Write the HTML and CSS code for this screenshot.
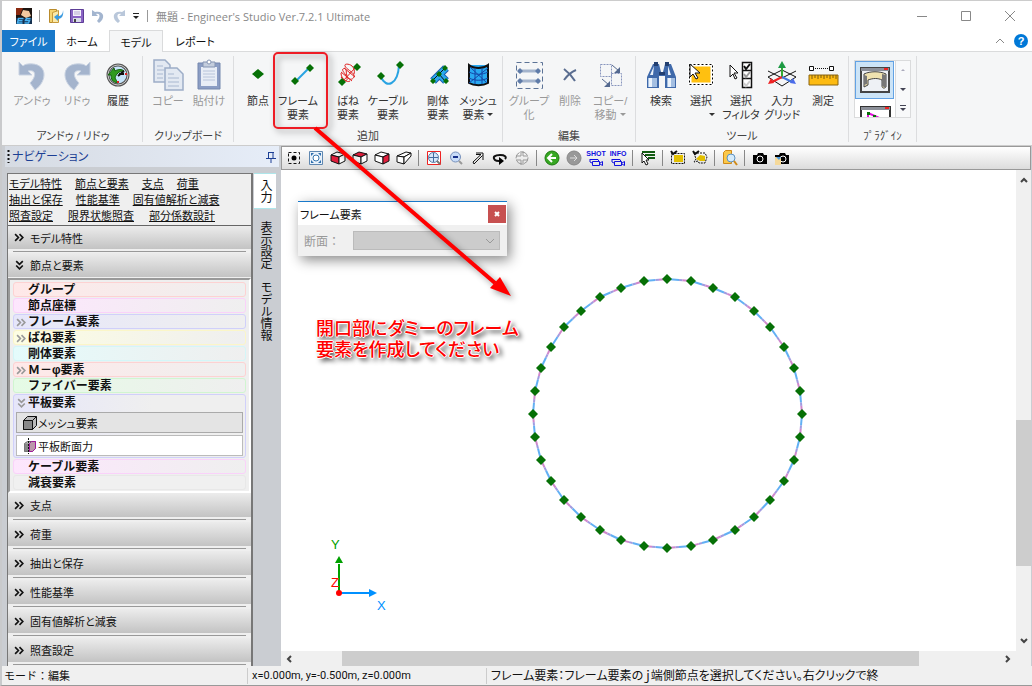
FILE: index.html
```html
<!DOCTYPE html>
<html lang="ja">
<head>
<meta charset="utf-8">
<title>無題 - Engineer's Studio Ver.7.2.1 Ultimate</title>
<link rel="stylesheet" href="styles.css">
</head>
<body>
<div class="app">
  <header class="titlebar">
    <svg class="ico16" viewBox="0 0 16 16"><path fill="#1c1410" d="M0 0h16v16H0z"/><path fill="#8a2a10" d="M0 0h7l-3 7H0z"/><path fill="#f3c9a0" d="M7 2l6 1 2 5-5 2-5-3z"/><path fill="#16314f" d="M0 10h16v6H0z"/><path d="M7.500 10.500h-5l-1 4.500h5M2.500 12.800h4M14.500 10.500h-4l-1 2h4l-1 2.500h-4" stroke="#4ab4f4" stroke-width="1.500" fill="none"/></svg>
    <span class="bar-sep"></span>
    <button class="qat" aria-label="開く"><svg class="ico16" viewBox="0 0 16 16"><path fill="#f6d572" stroke="#b98b2c" d="M1.500 1.500h7v13h-7z"/><path fill="#fbe9a8" stroke="#c79a3a" d="M4.500 4.500l6-2v12h-6z"/><path d="M15 2c0 4-2 6-5 6V6L6 9l4 4v-2c4 0 6-4 5-9" fill="#3c9be0"/></svg></button>
    <button class="qat" aria-label="保存"><svg class="ico16" viewBox="0 0 16 16"><path fill="#8a63c4" stroke="#5d3d96" d="M1.500 1.500h13v13h-13z"/><path fill="#f4f2fa" d="M4 2h8v6H4z"/><path d="M5 4h6M5 6h6" stroke="#b7a9d2"/><path fill="#d9dce8" d="M4 10h8v4H4z"/><path fill="#444" d="M5 11h2v3H5z"/></svg></button>
    <button class="qat" aria-label="元に戻す"><svg class="ico16" viewBox="0 0 16 16"><path d="M2 2v6h6L6 6c4-1 5 3 1 7l2 2c7-5 5-13-4-11z" fill="#a3b5cf"/></svg></button>
    <button class="qat" aria-label="やり直す"><svg class="ico16" viewBox="0 0 16 16"><path d="M14 2v6H8l2-2c-4-1-5 3-1 7l-2 2C0 10 2 2 11 4z" fill="#b9c7da"/></svg></button>
    <button class="qat narrow" aria-label="カスタマイズ"><svg class="ico8" viewBox="0 0 8 8"><path d="M1 1.500h6" stroke="#222"/><path d="M1 4h6L4 7z" fill="#222"/></svg></button>
    <span class="bar-sep"></span>
    <h1 class="app-title">無題 - Engineer's Studio Ver.7.2.1 Ultimate</h1>
    <div class="win-buttons">
      <button aria-label="最小化"><svg class="ico10" viewBox="0 0 10 10"><path d="M0 5.500h10"/></svg></button>
      <button aria-label="最大化"><svg class="ico10" viewBox="0 0 10 10"><path d="M.5.5h9v9h-9z"/></svg></button>
      <button aria-label="閉じる"><svg class="ico10" viewBox="0 0 10 10"><path d="M0 0l10 10M10 0L0 10"/></svg></button>
    </div>
  </header>

  <nav class="tabs">
    <button class="tab file">ファイル</button>
    <button class="tab">ホーム</button>
    <button class="tab active">モデル</button>
    <button class="tab">レポート</button>
    <div class="tabs-right">
      <button aria-label="リボンを折りたたむ"><svg class="ico10" viewBox="0 0 10 10"><path d="M1 7l4-4 4 4" fill="none" stroke="#888"/></svg></button>
      <button aria-label="ヘルプ" class="help">?</button>
    </div>
  </nav>

  <section class="ribbon">
    <div class="group tight">
      <div class="items">
        <button class="rb w48 off"><svg class="ico32" viewBox="0 0 32 32"><path d="M3 3v13h13l-4-4c8-2 9 5 2 12l5 7c13-9 13-28-7-26-3 0-5 2-5 2z" fill="#a4b4cd" stroke="#c9d3e2"/></svg><span>アンドゥ</span></button>
        <button class="rb w42 off"><svg class="ico32" viewBox="0 0 32 32"><path d="M29 3v13H16l4-4c-8-2-9 5-2 12l-5 7C0 22 0 3 20 5c3 0 5 2 5 2z" fill="#a4b4cd" stroke="#c9d3e2"/></svg><span>リドゥ</span></button>
        <button class="rb"><svg class="ico32" viewBox="0 0 32 32"><circle cx="16" cy="16" r="10" fill="#c6e4fa" stroke="#555" stroke-width="3"/><circle cx="16" cy="16" r="10" fill="none" stroke="#ccc"/><path d="M6 16l6-7 1 3c3-2 7-2 9 0-5 0-8 3-9 7 1 2 2 3 3 5-6-1-7-4-7-8z" fill="#2f9a1f" stroke="#17600f"/><path d="M16 17l6-5M17 15h5" stroke="#111" stroke-width="2"/><path d="M15 23h2M23 15h2" stroke="#d22" stroke-width="2"/></svg><span>履歴</span></button>
      </div>
      <div class="group-name">アンドゥ / リドゥ</div>
    </div>
    <div class="group tight">
      <div class="items">
        <button class="rb w42 off"><svg class="ico32" viewBox="0 0 32 32"><g fill="#e3e9f2" stroke="#9dadc7" stroke-width="1.500"><path d="M2 1h11l5 5v17H2z"/><path d="M13 9h12l6 6v16H13z"/></g><path d="M5 7h6M5 11h9M5 15h6M5 19h6M16 15h6M16 19h11M16 23h11M16 27h11" stroke="#a9b8d0"/></svg><span>コピー</span></button>
        <button class="rb off"><svg class="ico32" viewBox="0 0 32 32"><path d="M5 4h22v26H5z" fill="#8b9dc4" stroke="#7487ae"/><path d="M8 8h16v19H8z" fill="#e8edf6"/><path d="M10 3h12v5H10z" fill="#c4cddd" stroke="#8595b3"/><circle cx="16" cy="3" r="2" fill="#fff" stroke="#8595b3"/><path d="M10 12h12M10 15h12M10 18h12M10 21h12" stroke="#b8c4da"/></svg><span>貼付け</span></button>
      </div>
      <div class="group-name">クリップボード</div>
    </div>
    <div class="group tight">
      <div class="items">
        <button class="rb"><svg class="ico32" viewBox="0 0 32 32"><path d="M16 10l6 5-6 5-6-5z" fill="#067006"/></svg><span>節点</span></button>
        <button class="rb"><svg class="ico32" viewBox="0 0 32 32"><path d="M13 23L27 9" stroke="#29a3e2" stroke-width="2"/><path d="M28 5l4 4-4 4-4-4zM13 18l4 4-4 4-4-4z" fill="#067006"/></svg><span>フレーム<br>要素</span></button>
        <button class="rb spaced"><svg class="ico32" viewBox="0 0 32 32"><path d="M10 23l14-15M9 13l11 9M12 9l11 9M11 10c5-3 2 6 5 9s7 0 6-3-8-6-9-9 5-2 7 0 3 5 2 8M9 14c0 6 6 10 9 8M9 18c3 4 7 5 6 1s-6-8-4-9" stroke="#e02020" fill="none"/><path d="M25 4l4 4-4 4-4-4zM10 19l4 4-4 4-4-4z" fill="#067006"/></svg><span>ばね<br>要素</span></button>
        <button class="rb"><svg class="ico32" viewBox="0 0 32 32"><path d="M12 18c5 12 17 8 18-12" stroke="#29a3e2" stroke-width="2" fill="none" transform="translate(-3 0)"/><path d="M28 2l4 4-4 4-4-4zM9 13l4 4-4 4-4-4z" fill="#067006"/></svg><span>ケーブル<br>要素</span></button>
        <button class="rb spaced"><svg class="ico32" viewBox="0 0 32 32"><path d="M11 22L24 9M17 15l7 7" stroke="#1b5fae" stroke-width="8"/><path d="M11 22L24 9M17 15l7 7" stroke="#29a9ee" stroke-width="6"/><path d="M10 22l13-13M17 15l6 7" stroke="#111"/><path d="M23 6l3 3-3 3-3-3zM17 12l3 3-3 3-3-3zM11 19l3 3-3 3-3-3zM24 19l3 3-3 3-3-3z" fill="#067006"/></svg><span>剛体<br>要素</span></button>
        <button class="rb"><svg class="ico32" viewBox="0 0 32 32"><path d="M7 6v18c5 3 14 3 19 0V6" fill="#29a9f2"/><path d="M7 6c5 4 14 4 19 0v18c-5 3-14 3-19 0z" fill="#29a9f2" stroke="#111" stroke-width="2"/><path d="M13 9v16M20 9v16M7 13c6 3 13 3 19 0M7 19c6 3 13 3 19 0M7 24L26 9M8 8l17 16" stroke="#1546a8" fill="none"/></svg><span>メッシュ<br>要素<i class="drop"></i></span></button>
      </div>
      <div class="group-name">追加</div>
    </div>
    <div class="group">
      <div class="items">
        <button class="rb w42 off"><svg class="ico32" viewBox="0 0 32 32"><path d="M3.500 3.500h26v26h-26z" fill="none" stroke="#5c7396" stroke-dasharray="5 3"/><path d="M5 12h22M5 22h22" stroke="#a3b3cc" stroke-width="3"/><path d="M7 9l3 3-3 3-3-3zM25 9l3 3-3 3-3-3zM7 19l3 3-3 3-3-3zM25 19l3 3-3 3-3-3z" fill="#5f7ba8"/></svg><span>グループ<br>化</span></button>
        <button class="rb off"><svg class="ico32" viewBox="0 0 32 32"><path d="M10 10c4 3 8 7 11 12M22 11c-5 2-9 6-12 10" stroke="#5a6d90" stroke-width="2" fill="none"/></svg><span>削除</span></button>
        <button class="rb off"><svg class="ico32" viewBox="0 0 32 32"><g fill="none" stroke="#8795bd" stroke-dasharray="2 1"><path d="M6.500 5.500h11v12h-11zM17.500 14.500h10v12h-10z"/></g><path d="M18 6l7 6M8 20l7 6" stroke="#54698f"/><path d="M26 8v6h-6zM16 22v6h-6z" fill="#54698f"/></svg><span>コピー/<br>移動<i class="drop"></i></span></button>
      </div>
      <div class="group-name">編集</div>
    </div>
    <div class="group">
      <div class="items">
        <button class="rb"><svg class="ico32" viewBox="0 0 32 32"><path d="M2 18L8 5h6l2 8h2l2-8h6l5 13v11H20V17h-6v12H2z" fill="#3f69aa"/><path d="M3 19h9v9H3zM22 19h8v9h-8z" fill="#a4bfe2"/><path d="M4 19h3v9H4zM23 19h3v9h-3zM9 7l-4 9h3zM23 7v9h3z" fill="#eaf2fb"/><path d="M9 3h4v4H9zM20 3h4v4h-4zM14 13h6v3h-6z" fill="#223f70"/></svg><span>検索</span></button>
        <button class="rb"><svg class="ico32" viewBox="0 0 32 32"><path d="M5 6h22v19H5z" fill="#ffc010" stroke="#fff" stroke-width="3"/><path d="M4.500 5.500h23v20h-23z" fill="none" stroke="#000" stroke-dasharray="2 2"/><path d="M5 5l10 9h-5l3 5-2 1-3-5-3 3z" fill="#fff" stroke="#111"/></svg><span>選択<br><i class="drop right"></i></span></button>
        <button class="rb"><svg class="ico32" viewBox="0 0 32 32"><path d="M5 6l8 8H9l3 5-2 1-2-5-3 3z" fill="#fff" stroke="#111"/><path d="M17.500 3.500h9v8h-9zM17.500 11.500h9v8h-9zM17.500 19.500h9v9h-9z" fill="#fff" stroke="#111" stroke-width="1.500"/><path d="M19 7l2 3 4-5" stroke="#111" stroke-width="2" fill="none"/><path d="M19 15l2 3 4-5" stroke="#999" stroke-width="2" fill="none"/><path d="M19 24l2 3 4-5" stroke="#ccc" stroke-width="2" fill="none"/></svg><span>選択<br>フィルタ</span></button>
        <button class="rb w42"><svg class="ico32" viewBox="0 0 32 32"><path d="M2 18l14-7 14 7-14 9zM2 12l14 7 14-7" fill="none" stroke="#111"/><path d="M16 18V7" stroke="#3a3" stroke-width="2"/><path d="M16 2l4 7h-8z" fill="#1d9a44"/><path d="M16 18L6 23" stroke="#e22" stroke-width="2"/><path d="M2 25l3-6 3 5z" fill="#e22"/><path d="M16 18l10 5" stroke="#47d" stroke-width="2"/><path d="M30 25l-3-6-3 5z" fill="#4a6bea"/></svg><span>入力<br>グリッド</span></button>
        <button class="rb"><svg class="ico32" viewBox="0 0 32 32"><path d="M2 16h29v10H2z" fill="#fdbb12" stroke="#8a6510"/><path d="M5 16v4M8 16v3M11 16v4M14 16v3M17 16v4M20 16v3M23 16v4M26 16v3M29 16v4" stroke="#7c5a0c"/><path d="M2.500 7.500h4v4h-4zM22.500 7.500h4v4h-4z" fill="#fff" stroke="#111"/><path d="M8 9.500h14" stroke="#111" stroke-dasharray="1 1"/></svg><span>測定</span></button>
      </div>
      <div class="group-name">ツール</div>
    </div>
    <div class="group">
      <div class="gallery">
        <div class="gallery-list">
          <button class="gal on" aria-label="プラグイン 1"><svg class="ico32" viewBox="0 0 32 32"><path d="M2 4h28v24H2z" fill="#eef1f5" stroke="#444" stroke-width="2"/><path d="M2 4h28v3H2z" fill="#8b8f98"/><path d="M25 5h4" stroke="#e22" stroke-width="2"/><path d="M5 10c6-3 16-3 22 0v13c-2 2-4 1-4-1v-6c-4-2-9-2-14 0v5l-4 2z" fill="#efe2b0" stroke="#444"/><path d="M23 10l4 1v13l-4-2zM5 11l3 1v8l-3 1z" fill="#777"/></svg></button>
          <button class="gal" aria-label="プラグイン 2"><svg class="ico32" viewBox="0 0 32 32"><path d="M2 5h29v26H2z" fill="#fff" stroke="#333" stroke-width="2"/><path d="M2 5h29v3H2z" fill="#8b8f98"/><path d="M26 6h4" stroke="#e22" stroke-width="2"/><path d="M9 11l16 7M9 11v15M15 14v12M25 18v8" stroke="#e010d8" stroke-width="2"/><path d="M8 10h3v3H8zM14 13h3v3h-3zM23 16h3v3h-3z" fill="#067006"/></svg></button>
        </div>
        <div class="gallery-nav">
          <button aria-label="上へ"><svg class="ico8" viewBox="0 0 8 8"><path d="M2 5h4L4 3z" fill="#aab"/></svg></button>
          <button aria-label="下へ"><svg class="ico8" viewBox="0 0 8 8"><path d="M1 3h6L4 6z" fill="#445"/></svg></button>
          <button aria-label="一覧"><svg class="ico8" viewBox="0 0 8 8"><path d="M1 1.500h6" stroke="#445"/><path d="M1 4h6L4 7z" fill="#445"/></svg></button>
        </div>
      </div>
      <div class="group-name">ﾌﾟﾗｸﾞｲﾝ</div>
    </div>
  </section>

  <div class="body">
    <aside class="nav">
      <div class="nav-head"><svg class="grip" viewBox="0 0 3 13"><path d="M1.500 0v13" stroke="#111" stroke-width="2" stroke-dasharray="2 2"/></svg><h2>ナビゲーション</h2>
        <button aria-label="固定"><svg class="ico12" viewBox="0 0 12 12"><path d="M3.500 1v6M3 1.500h6M8 1v6M1 7.500h10M6 7v5" stroke="#1c3f94" fill="none"/></svg></button></div>
      <div class="nav-body">
        <div class="nav-panel">
          <div class="links">
            <div><a href="#model">モデル特性</a><a href="#node">節点と要素</a><a href="#support">支点</a><a href="#load">荷重</a></div>
            <div><a href="#extract">抽出と保存</a><a href="#perf">性能基準</a><a href="#eigen">固有値解析と減衰</a></div>
            <div class="wide"><a href="#check">照査設定</a><a href="#limit">限界状態照査</a><a href="#factor">部分係数設計</a></div>
          </div>
          <div class="accordion">
            <button class="acc first" id="model"><svg class="chev" viewBox="0 0 10 10"><path d="M1 2l3 3-3 3M5 2l3 3-3 3"/></svg>モデル特性</button>
            <button class="acc" id="node"><svg class="chev" viewBox="0 0 10 10"><path d="M2 1l3 3 3-3M2 5l3 3 3-3"/></svg>節点と要素</button>
            <div class="elements">
              <button class="el red">グループ</button>
              <button class="el pink">節点座標</button>
              <button class="el blue"><svg class="chev" viewBox="0 0 10 10"><path d="M1 2l3 3-3 3M5 2l3 3-3 3"/></svg>フレーム要素</button>
              <button class="el yellow"><svg class="chev" viewBox="0 0 10 10"><path d="M1 2l3 3-3 3M5 2l3 3-3 3"/></svg>ばね要素</button>
              <button class="el cyan">剛体要素</button>
              <button class="el red"><svg class="chev" viewBox="0 0 10 10"><path d="M1 2l3 3-3 3M5 2l3 3-3 3"/></svg>Ｍ－φ要素</button>
              <button class="el green">ファイバー要素</button>
              <div class="el-open">
                <button class="el plain"><svg class="chev" viewBox="0 0 10 10"><path d="M2 1l3 3 3-3M2 5l3 3 3-3"/></svg>平板要素</button>
                <button class="sub on"><svg class="ico16" viewBox="0 0 16 16"><path d="M1.500 5.500l4-4h9v9l-4 4h-9z" fill="#bbb" stroke="#111"/><path d="M1.500 5.500h9v9h-9z" fill="#888" stroke="#111"/><path d="M10.500 5.500l4-4" stroke="#111"/></svg>メッシュ要素</button>
                <button class="sub"><svg class="ico16" viewBox="0 0 16 16"><path d="M2.500 5.500l3-2h8v7l-3 3h-8z" fill="#bbb" stroke="#666"/><path d="M2.500 5.500h6v8h-6z" fill="#888"/><path d="M7.500 5.500l2-2h4v7l-3 3h-3z" fill="#b9a" stroke="#a0189a"/><path d="M6.500 0v16" stroke="#111" stroke-dasharray="2 1"/></svg>平板断面力</button>
              </div>
              <button class="el pink">ケーブル要素</button>
              <button class="el gray">減衰要素</button>
            </div>
            <button class="acc" id="support"><svg class="chev" viewBox="0 0 10 10"><path d="M1 2l3 3-3 3M5 2l3 3-3 3"/></svg>支点</button>
            <button class="acc" id="load"><svg class="chev" viewBox="0 0 10 10"><path d="M1 2l3 3-3 3M5 2l3 3-3 3"/></svg>荷重</button>
            <button class="acc" id="extract"><svg class="chev" viewBox="0 0 10 10"><path d="M1 2l3 3-3 3M5 2l3 3-3 3"/></svg>抽出と保存</button>
            <button class="acc" id="perf"><svg class="chev" viewBox="0 0 10 10"><path d="M1 2l3 3-3 3M5 2l3 3-3 3"/></svg>性能基準</button>
            <button class="acc" id="eigen"><svg class="chev" viewBox="0 0 10 10"><path d="M1 2l3 3-3 3M5 2l3 3-3 3"/></svg>固有値解析と減衰</button>
            <button class="acc" id="check"><svg class="chev" viewBox="0 0 10 10"><path d="M1 2l3 3-3 3M5 2l3 3-3 3"/></svg>照査設定</button>
          </div>
        </div>
        <div class="side-tabs">
          <button class="side active">入力</button>
          <button class="side">表示設定</button>
          <button class="side">モデル情報</button>
        </div>
      </div>
    </aside>

    <main class="view">
      <div class="toolbar">
        <button aria-label="選択点"><svg class="ico16" viewBox="0 0 16 16"><path d="M2.500 2.500h11v11h-11z" fill="none" stroke="#111" stroke-dasharray="3 2"/><circle cx="8" cy="8" r="2.500"/></svg></button>
        <button aria-label="全体表示"><svg class="ico16" viewBox="0 0 16 16"><path d="M1.500 1.500h13v13h-13z" fill="#e8f1fa" stroke="#5f87b0"/><circle cx="8" cy="8" r="3" fill="#fff" stroke="#3a76ae"/><path d="M3 6V3h3zM13 6V3h-3zM3 10v3h3zM13 10v3h-3z" fill="#2f6fae"/></svg></button>
        <button aria-label="正面"><svg class="ico16" viewBox="0 0 16 16"><g stroke="#111" stroke-linejoin="round"><path d="M1 5l6-3 8 2-6 3z" fill="#fff"/><path d="M1 5l8 2v7l-8-3z" fill="#e01e3c"/><path d="M9 7l6-3v7l-6 3z" fill="#fff"/></g></svg></button>
        <button aria-label="上面"><svg class="ico16" viewBox="0 0 16 16"><g stroke="#111" stroke-linejoin="round"><path d="M1 5l6-3 8 2-6 3z" fill="#e01e3c"/><path d="M1 5l8 2v7l-8-3z" fill="#fff"/><path d="M9 7l6-3v7l-6 3z" fill="#fff"/></g></svg></button>
        <button aria-label="側面"><svg class="ico16" viewBox="0 0 16 16"><g stroke="#111" stroke-linejoin="round"><path d="M1 5l6-3 8 2-6 3z" fill="#fff"/><path d="M1 5l8 2v7l-8-3z" fill="#fff"/><path d="M9 7l6-3v7l-6 3z" fill="#e01e3c"/></g></svg></button>
        <button aria-label="透視"><svg class="ico16" viewBox="0 0 16 16"><g fill="#fff" stroke="#111" stroke-linejoin="round"><path d="M1 6l9-4 5 1-7 4z"/><path d="M1 6l7 1v7l-7-2z"/><path d="M8 7l7-4v3l-7 8z"/></g></svg></button>
        <i class="tsep"></i>
        <button aria-label="範囲拡大"><svg class="ico16" viewBox="0 0 16 16"><path d="M1.500 1.500h13v13h-13z" fill="#fff" stroke="#e22"/><circle cx="7.500" cy="7.500" r="5" fill="#d7e7fa" stroke="#567ba8"/><path d="M7.500 3v9M3 7.500h9" stroke="#456b9e"/><path d="M11 11l3 3" stroke="#777" stroke-width="2"/></svg></button>
        <button aria-label="縮小"><svg class="ico16" viewBox="0 0 16 16"><circle cx="7.500" cy="7" r="5" fill="#c8dcf8" stroke="#7690bb"/><path d="M5 7h5" stroke="#16308a" stroke-width="2"/><path d="M11 11l3 3" stroke="#999" stroke-width="2"/></svg></button>
        <button aria-label="移動"><svg class="ico16" viewBox="0 0 16 16"><path d="M3 12l8-7.500H6M13 3v7M4 14l8.500-8.500M6 3h7M3 12l1 2" fill="none" stroke="#111"/></svg></button>
        <button aria-label="回転"><svg class="ico16" viewBox="0 0 16 16"><path d="M13 9c2-2 0-4-5-4s-8 2-5 5c1 1 3 1 4 1" stroke="#111" stroke-width="2" fill="none"/><path d="M7 7l5 4-5 4z"/></svg></button>
        <button aria-label="中心"><svg class="ico16" viewBox="0 0 16 16"><circle cx="8" cy="8" r="6" fill="none" stroke="#999" stroke-dasharray="7 2"/><path d="M7 1v5H2M9 1v5h5M7 15v-5H2M9 15v-5h5" fill="none" stroke="#999"/></svg></button>
        <i class="tsep"></i>
        <button aria-label="戻る"><svg class="ico16" viewBox="0 0 16 16"><circle cx="8" cy="8" r="7" fill="#37a722" stroke="#1d7a10"/><path d="M12 8H5M8 4L4 8l4 4" stroke="#fff" stroke-width="2" fill="none"/></svg></button>
        <button aria-label="進む"><svg class="ico16" viewBox="0 0 16 16"><circle cx="8" cy="8" r="7" fill="#999" stroke="#888"/><path d="M4 8h7M8 5l3 3-3 3" stroke="#ddd" fill="none"/></svg></button>
        <button class="cam"><span>SHOT</span><svg viewBox="0 0 16 8"><path d="M4.500 3.500h7v4h-7zM12 5l2.500-1.500v4L12 6M2 1.500h8l1 2M2 1v3l2 1" fill="none" stroke="#1010e0"/></svg></button>
        <button class="cam"><span>INFO</span><svg viewBox="0 0 16 8"><path d="M4.500 3.500h7v4h-7zM12 5l2.500-1.500v4L12 6M2 1.500h8l1 2M2 1v3l2 1" fill="none" stroke="#1010e0"/></svg></button>
        <i class="tsep"></i>
        <button aria-label="選択モード"><svg class="ico16" viewBox="0 0 16 16"><path d="M2 2h13M5 5h10M8 8h7" stroke="#145c14" stroke-width="2"/><path d="M2 3l7 7H6l2 4-2 1-2-4-2 2z" fill="#fff" stroke="#111"/></svg></button>
        <i class="tsep"></i>
        <button aria-label="矩形選択"><svg class="ico16" viewBox="0 0 16 16"><path d="M4 5h9v7H4z" fill="#e2bf00"/><path d="M1.500 3.500h13v10h-13z" fill="none" stroke="#111" stroke-dasharray="2 1"/><path d="M1 1l2 3 4-3" stroke="#111" stroke-width="2" fill="none"/></svg></button>
        <button aria-label="多角形選択"><svg class="ico16" viewBox="0 0 16 16"><path d="M4 9l4-4 5 1v5H8z" fill="#e2bf00"/><path d="M2 3h6l5 0 2 4-2 6H7l-1-2-4 1 2-3z" fill="none" stroke="#111" stroke-dasharray="2 1"/><path d="M1 1l2 3 4-3" stroke="#111" stroke-width="2" fill="none"/></svg></button>
        <i class="tsep"></i>
        <button aria-label="検索"><svg class="ico16" viewBox="0 0 16 16"><path d="M1.500 2.500l2-2h6v13h-8z" fill="#fbc84a" stroke="#d08a18"/><circle cx="9" cy="8" r="4" fill="#d5ebfb" stroke="#5d92c2"/><path d="M12 11l3 4" stroke="#d08a18" stroke-width="2"/></svg></button>
        <i class="tsep"></i>
        <button aria-label="撮影"><svg class="ico16" viewBox="0 0 16 16"><path d="M1 5h4l1-2h5l1 2h3v9H1z"/><circle cx="8" cy="9" r="3" fill="none" stroke="#fff"/></svg></button>
        <button aria-label="撮影して貼付け"><svg class="ico16" viewBox="0 0 16 16"><path d="M1 5h4l1-2h5l1 2h3v9H1z"/><circle cx="9" cy="9" r="3" fill="none" stroke="#fff"/><path d="M1 7h4l2 2v6H1z" fill="#f5d99a"/><path d="M2 7h5l-2 3z" fill="#4a9ae0"/></svg></button>
      </div>
      <div class="stage">
        <div class="canvas">
          <svg class="drawing" id="drawing">
            <g id="members"></g><g id="nodes" fill="#067006"></g>
            <g class="axes">
              <path d="M58 422V394" stroke="#00a000" stroke-width="2"/><path d="M58 386l4 7h-8z" fill="#00a000"/>
              <path d="M58 423h31" stroke="#0090ff" stroke-width="2"/><path d="M96 423l-8 4v-8z" fill="#0090ff"/>
              <text x="50" y="379" fill="#00a000">Y</text><text x="96" y="440" fill="#0090ff">X</text><text x="50" y="417" fill="#f00">Z</text>
              <circle cx="58" cy="423" r="3" fill="#f00"/>
            </g>
          </svg>
          <form class="dialog">
            <div class="dialog-head"><h3>フレーム要素</h3><button type="button" aria-label="閉じる"><svg class="ico8" viewBox="0 0 8 8"><path d="M2 2l4 4M6 2L2 6" stroke="#fff" stroke-width="2"/></svg></button></div>
            <div class="dialog-body"><label for="section">断面：</label>
              <div class="combo"><select id="section" disabled></select><svg class="ico10" viewBox="0 0 10 10"><path d="M1 3l4 4 4-4" fill="none" stroke="#999"/></svg></div></div>
          </form>
          <p class="note">開口部にダミーのフレーム<br>要素を作成してください</p>
        </div>
        <div class="vscroll"><svg class="ico8" viewBox="0 0 8 8"><path d="M1 6l3-3 3 3" class="arrow"/></svg><div class="track"><div class="thumb"></div></div><svg class="ico8" viewBox="0 0 8 8"><path d="M1 2l3 3 3-3" class="arrow"/></svg></div>
        <div class="hscroll"><svg class="ico8" viewBox="0 0 8 8"><path d="M6 1L3 4l3 3" class="arrow"/></svg><div class="track"><div class="thumb"></div></div><svg class="ico8" viewBox="0 0 8 8"><path d="M2 1l3 3-3 3" class="arrow"/></svg></div>
      </div>
    </main>
  </div>

  <footer class="status"><span class="mode">モード：編集</span><span class="coords">x=0.000m, y=-0.500m, z=0.000m</span><span class="hint">フレーム要素：フレーム要素のｊ端側節点を選択してください。右クリックで終</span></footer>

  <svg class="callout"><rect x="274" y="53" width="53" height="75" rx="4" fill="none" stroke="#ee1c25" stroke-width="2"/><path d="M315 128L495 283" stroke="#f00" stroke-width="4"/><path d="M511 296l-21-8 10-11z" fill="#f00"/></svg>
</div>
<script src="model.js"></script>
</body>
</html>
```
FILE: styles.css
```css
* { box-sizing: border-box; }
body {
  margin: 0;
  font-family: "Liberation Sans", "Noto Sans CJK JP", sans-serif;
  font-size: 11px;
  font-feature-settings: "palt";
  color: #111;
}
button { font: inherit; font-feature-settings: inherit; color: inherit; border: 0; padding: 0; margin: 0; background: none; }
h1, h2, h3, p { margin: 0; font-size: inherit; font-weight: normal; }
svg { display: block; flex: none; }
.ico8 { width: 8px; height: 8px; }
.ico10 { width: 10px; height: 10px; }
.ico12 { width: 12px; height: 12px; }
.ico16 { width: 16px; height: 16px; }
.ico32 { width: 32px; height: 32px; }

.app { position: relative; display: flex; flex-direction: column; height: 100vh; overflow: hidden; border-left: 2px solid #c9cacc; border-top: 1px solid #ccc; border-bottom: 1px solid #999; background: #fff; }

.titlebar { display: flex; align-items: center; height: 29px; padding-left: 14px; }
.bar-sep { width: 1px; height: 12px; margin: 0 8px 0 7px; background: #999; }
.qat { width: 21px; }
.qat.narrow { width: 8px; }
.app-title { font-family: "Open Sans", "Noto Sans CJK JP", sans-serif; color: #888; white-space: nowrap; }
.win-buttons { display: flex; margin-left: auto; }
.win-buttons button { display: flex; justify-content: center; width: 44px; }
.win-buttons path { fill: none; stroke: #888; }

.tabs { display: flex; height: 22px; border-bottom: 1px solid #dadbdc; }
.tab { width: 54px; height: 22px; }
.tab.file { width: 53px; background: #1979ca; color: #fff; }
.tab.active { background: #f5f6f7; border: 1px solid #dadbdc; border-bottom: 0; }
.tab:last-of-type { width: 64px; }
.tabs-right { display: flex; align-items: center; gap: 9px; margin-left: auto; padding-right: 4px; }
.help { width: 14px; height: 14px; border-radius: 50%; background: #0078d7; color: #fff; font-weight: bold; line-height: 14px; }

.ribbon { display: flex; height: 94px; padding-top: 4px; background: #f5f6f7; border-bottom: 1px solid #ccc; }
.group { display: flex; flex-direction: column; justify-content: space-between; height: 86px; padding: 0 5px; border-right: 1px solid #dcdddf; }
.group.tight { padding: 0 4px; }
.group.tight:first-child { padding-left: 6px; }
.items { display: flex; }
.group-name { line-height: 12px; text-align: center; color: #444; white-space: nowrap; }
.rb { display: flex; flex-direction: column; align-items: center; justify-content: flex-start; width: 40px; padding-top: 3px; line-height: 14px; color: #333; white-space: nowrap; }
.rb span { margin-top: 3px; }
.rb.off { color: #999; }
.rb.w42 { width: 42px; }
.rb.w48 { width: 48px; }
.rb.spaced { margin-left: 10px; }
.drop { display: inline-block; margin: 0 0 3px 3px; border: 3px solid transparent; border-top-color: currentColor; border-bottom: 0; }
.drop.right { margin-left: 22px; }
.gallery { display: flex; height: 58px; margin-top: 4px; border: 1px solid #dadbdc; background: #fff; overflow: hidden; }
.gallery-list { width: 40px; }
.gal { display: flex; align-items: center; justify-content: center; width: 39px; height: 38px; border: 1px solid transparent; }
.gal.on { background: #cce4f7; border-color: #62a2e4; }
.gallery-nav { display: flex; flex-direction: column; justify-content: space-around; padding: 0 3px; border-left: 1px solid #dadbdc; background: #f8f9fa; }

.body { display: flex; flex: 1; min-height: 0; background: #cacdd2; }
.nav { display: flex; flex-direction: column; width: 279px; padding-left: 3px; }
.nav-head { display: flex; align-items: center; height: 21px; padding: 0 2px; margin: 0 2px 1px 0; background: linear-gradient(90deg, #d6dbe3, #e6edf8); color: #1c3f94; }
.nav-head h2 { flex: 1; margin-left: 2px; font-size: 12px; line-height: 16px; }
.grip { width: 3px; height: 13px; }
.nav-body { display: flex; flex: 1; min-height: 0; padding: 5px 5px 0 2px; }
.nav-panel { width: 247px; border: 1px solid #777; border-bottom: 0; border-right: 2px solid #777; background: #efefef; overflow: hidden; }
.links { padding: 2px 1px 0; }
.links div { display: flex; gap: 13px; height: 16px; line-height: 16px; white-space: nowrap; }
.links .wide { gap: 15px; }
.links a { color: #111; text-underline-offset: 1px; }
.accordion { margin-top: 1px; }
.acc { position: relative; display: flex; align-items: center; gap: 5px; width: 100%; height: 24px; margin-bottom: 5px; padding-left: 6px; background: linear-gradient(#ececec, #c3c3c3); }
.acc::after { content: ""; position: absolute; left: 5px; right: 5px; bottom: -3px; height: 1px; background: #999; }
.acc.first { border-top: 1px solid #666; margin-bottom: 4px; }
.chev { width: 11px; height: 11px; }
.chev path { fill: none; stroke: #111; stroke-width: 1.500; }
.elements { display: flex; flex-direction: column; gap: 1px; margin-top: -4px; padding: 2px 3px 1px; border: 2px solid #999; border-right-color: #fff; border-bottom-color: #fff; background: #efefef; position: relative; font-feature-settings: normal; }
.el { display: flex; align-items: center; height: 15px; padding-left: 14px; border: 1px solid; border-radius: 3px; font-size: 12px; font-weight: bold; line-height: 12px; width: 100%; }
.el .chev { margin: 2px 1px 0 -12px; }
.el .chev path { stroke: #999; }
.red { background: linear-gradient(90deg, #ffe8e8, #efefef); border-color: #fdd2d2; }
.pink { background: linear-gradient(90deg, #fde6fd, #efefef); border-color: #fad2fa; }
.blue { background: linear-gradient(90deg, #e6e6fa, #efefef); border-color: #d0d0fa; }
.yellow { background: linear-gradient(90deg, #fdfde2, #efefef); border-color: #fbf6c8; }
.cyan { background: linear-gradient(90deg, #e4fbfb, #efefef); border-color: #d4f6f8; }
.green { background: linear-gradient(90deg, #e5fbe5, #efefef); border-color: #d0f5d0; }
.gray { background: #f0f0f0; border-color: #e8e8e8; }
.plain { border-color: transparent; }
.el-open { display: flex; flex-direction: column; gap: 2px; padding: 0 2px 1px; border: 1px solid #d0d0fa; border-radius: 3px; background: linear-gradient(90deg, #e6e6fa, #efefef 60%); }
.el-open .plain { padding-left: 11px; }
.sub { display: flex; align-items: center; height: 21px; padding-left: 5px; border: 1px solid #bbb; background: #fff; font-feature-settings: "palt"; }
.sub.on { background: #e4e4e4; border-color: #aaa; }
.side-tabs { display: flex; flex-direction: column; align-items: flex-start; gap: 12px; padding-left: 1px; }
.side { width: 22px; padding: 0 4px; font-size: 12px; line-height: 14px; writing-mode: vertical-rl; font-feature-settings: normal; }
.side.active { height: 36px; padding: 5px 4px; background: #fff; border-top: 1px solid #aee6ea; border-bottom: 1px solid #aee6ea; }

.view { display: flex; flex-direction: column; flex: 1; min-width: 0; padding-right: 1px; }
.toolbar { display: flex; align-items: center; height: 24px; padding-left: 1px; border: 1px solid #999; background: linear-gradient(#fff, #dcdcdc); }
.toolbar button { display: flex; flex-direction: column; align-items: center; width: 22px; }
.tsep { width: 1px; height: 16px; margin: 0 4px 0 3px; background: #888; }
.cam { color: #1010e0; font-size: 7px; line-height: 8px; font-weight: bold; }
.cam svg { width: 16px; height: 8px; }
.stage { display: grid; grid-template: minmax(0, 1fr) 15px / minmax(0, 1fr) 15px; flex: 1; min-height: 0; background: #f0f0f0; }
.canvas { position: relative; background: #fff; overflow: hidden; }
.drawing { width: 100%; height: 100%; }
.axes text { font-size: 13px; }
.vscroll, .hscroll { display: flex; align-items: center; padding: 6px 0; gap: 6px; }
.vscroll { flex-direction: column; }
.hscroll { padding: 0 4px; }
.track { flex: 1; display: flex; align-self: stretch; }
.vscroll .track { padding-top: 230px; }
.hscroll .track { padding-left: 43px; }
.thumb { background: #cdcdcd; }
.vscroll .thumb { width: 100%; height: 69%; }
.hscroll .thumb { width: 88%; }
.arrow { fill: none; stroke: #444; stroke-width: 2; }

.dialog { position: absolute; left: 17px; top: 31px; width: 209px; border-top: 1px solid #1979ca; background: #f0f0f0; box-shadow: 3px 4px 12px #0007; }
.dialog-head { display: flex; align-items: center; justify-content: space-between; height: 23px; padding: 0 1px 0 2px; background: #fff; }
.dialog-head button { display: flex; align-items: center; justify-content: center; width: 18px; height: 18px; background: #c75050; }
.dialog-body { display: flex; align-items: center; gap: 13px; height: 31px; padding: 0 7px 0 6px; color: #999; font-size: 12px; font-feature-settings: normal; }
.combo { display: flex; align-items: center; flex: 1; height: 19px; padding-right: 4px; background: #ccc; border: 1px solid #bbb; }
.combo select { flex: 1; min-width: 0; height: 100%; appearance: none; border: 0; background: transparent; }
.note { position: absolute; left: 35px; top: 149px; font-size: 18px; font-weight: 500; line-height: 21px; white-space: nowrap; color: #f00; text-shadow: 1px 0 #fff, -1px 0 #fff, 0 1px #fff, 0 -1px #fff, 3px 3px 5px #000; }
.callout { position: absolute; left: -2px; top: -1px; width: 520px; height: 300px; pointer-events: none; filter: drop-shadow(3px 3px 3px #0006); }

.status { display: flex; align-items: center; height: 19px; background: #f0f0f0; line-height: 16px; white-space: nowrap; }
.mode { width: 246px; padding-left: 2px; border-right: 1px solid #ccc; font-feature-settings: normal; }
.coords { width: 239px; padding-left: 4px; border-right: 1px solid #ccc; font-family: Roboto, "Liberation Sans", sans-serif; }
.hint { padding-left: 4px; overflow: hidden; font-size: 12px; }
```
FILE: model.js
```js
const NS = "http://www.w3.org/2000/svg";
const center = { x: 386.4, y: 243.9 };
const radius = 134.5;
const count = 36;

function add(parent, name, attrs) {
  const el = document.createElementNS(NS, name);
  for (const key in attrs) el.setAttribute(key, attrs[key]);
  document.getElementById(parent).appendChild(el);
}

const points = Array.from({ length: count }, (_, i) => {
  const a = (i * 2 * Math.PI) / count;
  return { x: Math.round(center.x + radius * Math.sin(a)), y: Math.round(center.y - radius * Math.cos(a)) };
});

points.forEach((p, i) => {
  const q = points[(i + 1) % count];
  const at = t => ({ x: p.x + (q.x - p.x) * t, y: p.y + (q.y - p.y) * t });
  [[0, 0.5, "#62b0f4"], [0.5, 0.65, "#a09be0"], [0.65, 1, "#d088cc"]].forEach(([s, e, color]) => {
    const a = at(s), b = at(e);
    add("members", "line", { x1: a.x, y1: a.y, x2: b.x, y2: b.y, stroke: color, "stroke-width": 2 });
  });
  add("nodes", "path", { d: `M${p.x} ${p.y - 5}l5 5-5 5-5-5z` });
});
```
